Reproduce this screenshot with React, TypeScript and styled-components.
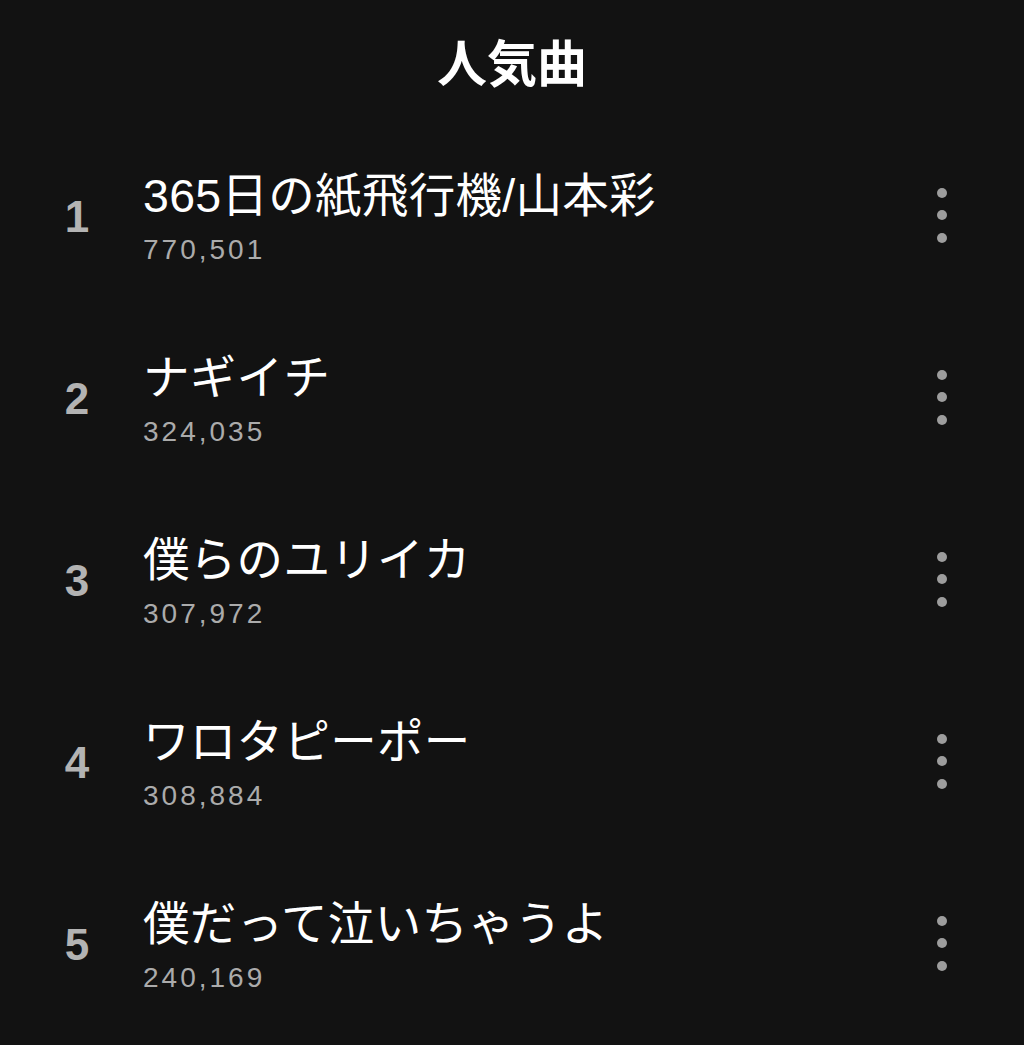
import React from "react";
import styled, { createGlobalStyle } from "styled-components";

const Global = createGlobalStyle`
  html, body { margin: 0; padding: 0; background: #121212; }
  body { font-family: "Liberation Sans", "Noto Sans CJK JP", sans-serif; }
`;

const Page = styled.div`
  width: 1024px;
  min-height: 1045px;
  background: #121212;
  color: #fff;
  display: flex;
  flex-direction: column;
`;

const Header = styled.header`
  height: 125px;
  display: flex;
  align-items: center;
  justify-content: center;
`;

const Title = styled.h1`
  margin: 0;
  font-family: "Noto Sans CJK JP", sans-serif;
  font-weight: 700;
  font-size: 50px;
  line-height: 1;
  color: #fff;
  margin-top: -6px;
`;

const List = styled.ol`
  list-style: none;
  margin: 0;
  padding: 0;
  display: flex;
  flex-direction: column;
`;

const Row = styled.li`
  height: 182px;
  display: grid;
  grid-template-columns: 58px 1fr 40px;
  column-gap: 37px;
  align-items: center;
  padding: 0 62px 0 48px;
`;

const Rank = styled.span`
  text-align: center;
  font-family: "Liberation Sans", sans-serif;
  font-weight: 700;
  font-size: 44px;
  color: #b3b3b3;
  padding-top: 2px;
`;

const Info = styled.div`
  display: flex;
  flex-direction: column;
  gap: 14px;
  margin-top: 6px;
`;

const SongName = styled.div`
  font-family: "Liberation Sans", "Noto Sans CJK JP", sans-serif;
  font-size: 46.5px;
  line-height: 48px;
  color: #fff;
  white-space: nowrap;
  letter-spacing: 0.3px;
`;

const Plays = styled.div`
  font-family: "Liberation Sans", sans-serif;
  font-size: 28px;
  line-height: 32px;
  letter-spacing: 3px;
  color: #ababab;
`;

const MoreButton = styled.button`
  background: none;
  border: none;
  padding: 0;
  width: 40px;
  height: 60px;
  display: flex;
  flex-direction: column;
  align-items: center;
  justify-content: center;
  gap: 12.5px;
  cursor: pointer;
  margin-top: -2px;
`;

const Dot = styled.span`
  width: 10px;
  height: 10px;
  border-radius: 50%;
  background: #9d9d9d;
`;

const songs = [
  { name: "365日の紙飛行機/山本彩", plays: "770,501" },
  { name: "ナギイチ", plays: "324,035" },
  { name: "僕らのユリイカ", plays: "307,972" },
  { name: "ワロタピーポー", plays: "308,884" },
  { name: "僕だって泣いちゃうよ", plays: "240,169" },
];

export default function App() {
  return (
    <Page>
      <Global />
      <Header>
        <Title>人気曲</Title>
      </Header>
      <List>
        {songs.map((s, i) => (
          <Row key={s.name}>
            <Rank>{i + 1}</Rank>
            <Info>
              <SongName>{s.name}</SongName>
              <Plays>{s.plays}</Plays>
            </Info>
            <MoreButton aria-label="more">
              <Dot />
              <Dot />
              <Dot />
            </MoreButton>
          </Row>
        ))}
      </List>
    </Page>
  );
}
